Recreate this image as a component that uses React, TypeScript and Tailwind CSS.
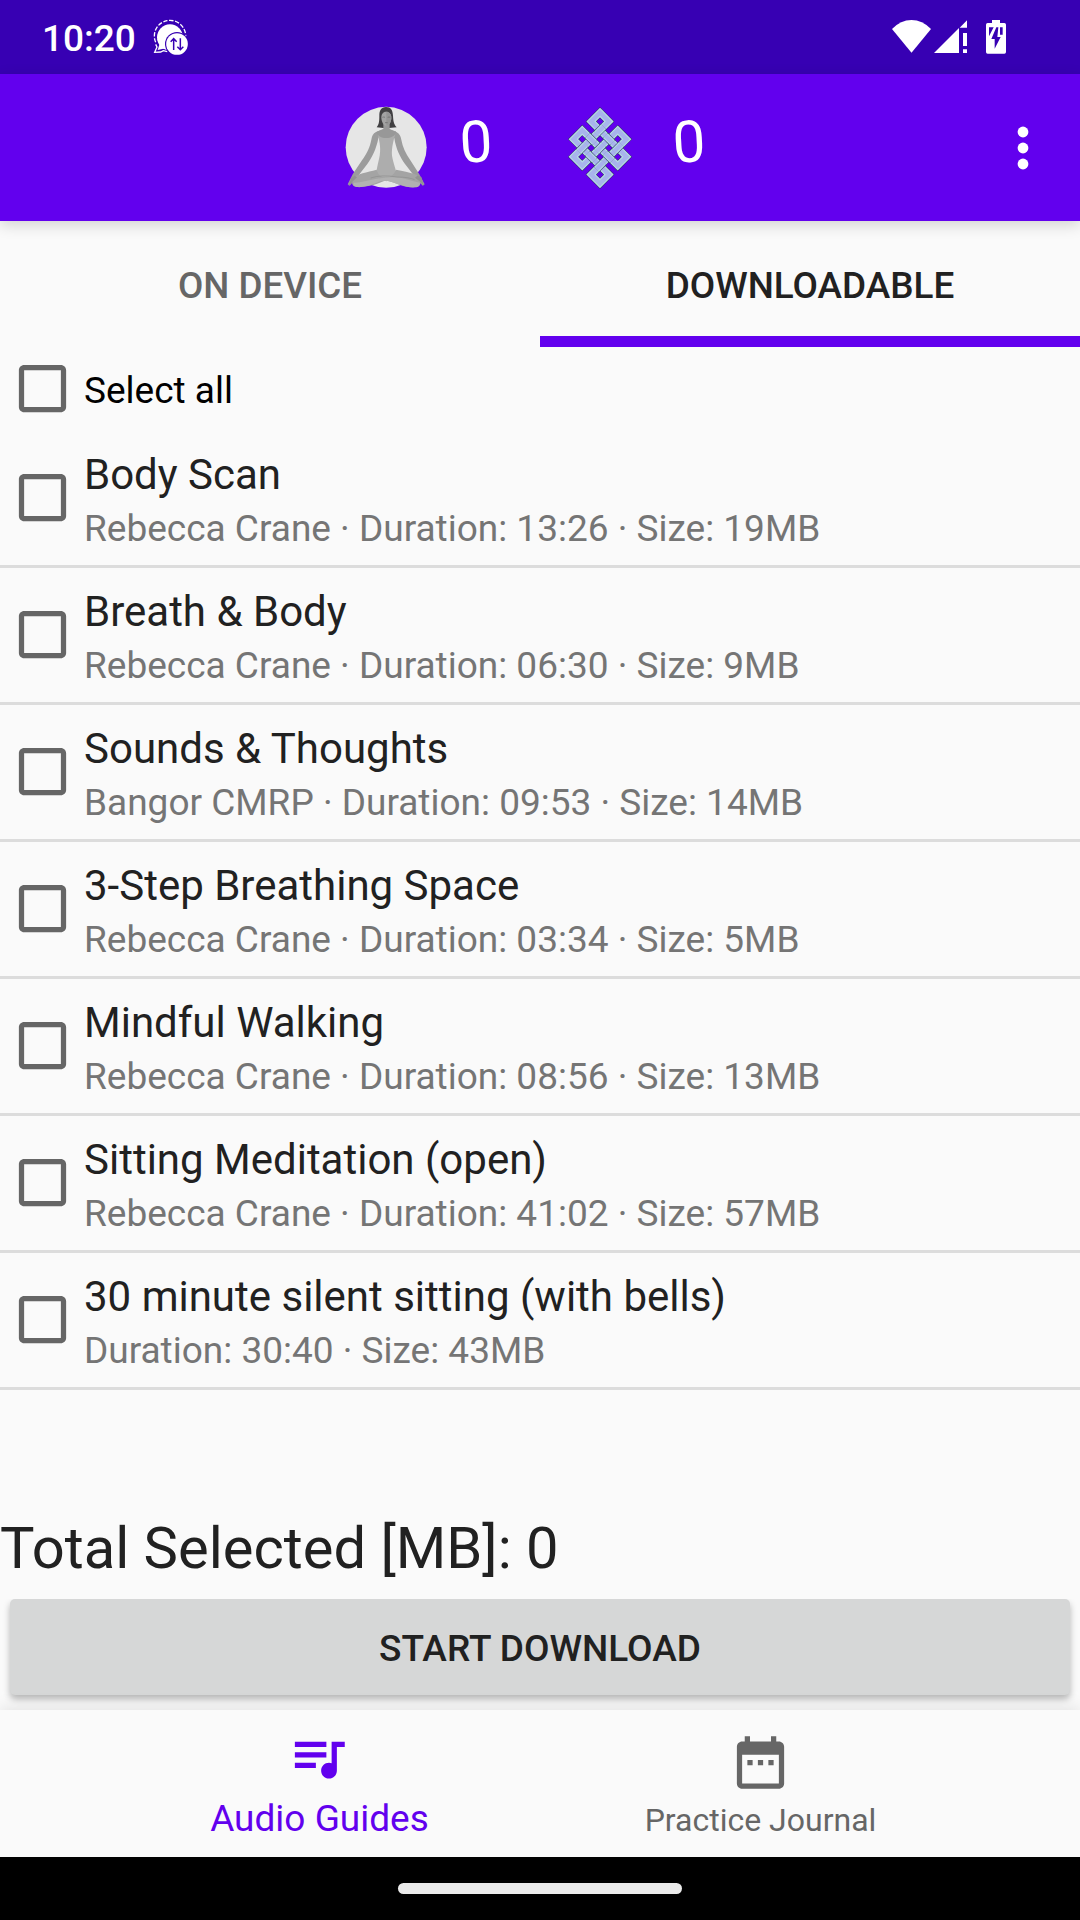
import React from "react";

type Guide = { title: string; detail: string };

const guides: Guide[] = [
  { title: "Body Scan", detail: "Rebecca Crane · Duration: 13:26 · Size: 19MB" },
  { title: "Breath & Body", detail: "Rebecca Crane · Duration: 06:30 · Size: 9MB" },
  { title: "Sounds & Thoughts", detail: "Bangor CMRP · Duration: 09:53 · Size: 14MB" },
  { title: "3-Step Breathing Space", detail: "Rebecca Crane · Duration: 03:34 · Size: 5MB" },
  { title: "Mindful Walking", detail: "Rebecca Crane · Duration: 08:56 · Size: 13MB" },
  { title: "Sitting Meditation (open)", detail: "Rebecca Crane · Duration: 41:02 · Size: 57MB" },
  { title: "30 minute silent sitting (with bells)", detail: "Duration: 30:40 · Size: 43MB" },
];

function Checkbox() {
  return (
    <span className="flex w-[84px] shrink-0 items-center pb-px pl-[10.5px]">
      <svg viewBox="0 0 24 24" className="size-[63px]" fill="#666666">
        <path d="M19 5v14H5V5h14m0-2H5c-1.1 0-2 .9-2 2v14c0 1.1.9 2 2 2h14c1.1 0 2-.9 2-2V5c0-1.100-.9-2-2-2z" />
      </svg>
    </span>
  );
}

function SyncBubbleIcon() {
  return (
    <svg viewBox="456 57 114 111" className="h-[37px] w-[38px]" fill="none">
      <path
        d="M467 128 A47 47 0 1 1 557 110"
        stroke="#fff"
        strokeWidth="4"
        strokeDasharray="13 5"
        transform="translate(0 -1)"
      />
      <path d="M467 133l4 8-7 16 18-1 8-4 12 3" stroke="#fff" strokeWidth="4" />
      <circle cx="510" cy="112" r="39" fill="#fff" />
      <path d="M472 118L478 134 473 150 490 146 505 151V120Z" fill="#fff" />
      <circle cx="531" cy="132" r="36" fill="#3700b3" />
      <circle cx="531" cy="132" r="32.500" fill="#fff" />
      <path
        d="M521 150V117M512 125l9-9 9 9M541 115v33M532 140l9 9 9-9"
        stroke="#3700b3"
        strokeWidth="4.500"
      />
    </svg>
  );
}

function StatusIcons() {
  return (
    <svg viewBox="96 54 345 114" className="h-[38px] w-[115px]" fill="#fff">
      <path d="M96 87 Q122 60 154.500 60 Q187 60 213 87 L154.500 158 Z" />
      <path d="M222 159 L297 84 V159 Z M299 83 L321 61 V83 Z" />
      <path d="M309 99h12v39h-12z M309 148h12v11h-12z" />
      <path
        fillRule="evenodd"
        d="M396 60h24v9h13q5 0 5 5v82q0 5-5 5h-50q-5 0-5-5V74q0-5 5-5h13z M387 82v27l14-27z M409 82l-15 35h10v29l18-35h-10l3-29z M420 82v22h8V82z"
      />
    </svg>
  );
}

function MeditationIcon() {
  return (
    <svg viewBox="31 33 246 249" className="h-[83px] w-[82px]">
      <circle cx="154.500" cy="157" r="121.500" fill="#e6e6e6" />
      <path
        d="M154 36 C139 36 134 47 134 61 C134 77 134 87 126 97 L146 99 H163 L186 97 C176 85 176 76 175 62 C174 45 169 36 154 36Z"
        fill="#414042"
      />
      <path d="M146 86h19v19h-19z" fill="#989898" />
      <path d="M154 50 C145 50 140 57 140 68 C141 82 147 92 155 92 C163 92 170 81 170 68 C170 57 164 50 154 50Z" fill="#a3a3a3" />
      <path d="M155 50 C164 50 170 57 170 68 C170 81 163 92 155 92Z" fill="#959595" />
      <path d="M143 67q4-2 8 0M159 67q4-2 8 0M151 83h8" stroke="#555" strokeWidth="1.500" fill="none" />
      <path
        d="M145 104 L124 111 C115 115 112 123 110 134 C106 155 98 174 82 196 L54 238 L39 268 L45 272 L66 248 L98 207 C112 188 125 162 131 130Z"
        fill="#9c9c9c"
      />
      <path
        d="M165 104 L185 111 C194 115 198 123 200 134 C204 155 212 174 227 196 L254 238 L270 268 L264 272 L244 250 L211 207 C197 188 184 162 179 130Z"
        fill="#9c9c9c"
      />
      <path
        d="M128 109 C132 135 140 153 135 182 C130 207 125 223 124 244 L155 259 L187 244 C184 221 176 206 172 182 C170 156 178 134 184 109 L164 104 H145Z"
        fill="#adadad"
      />
      <path d="M125 111 L145 102 H165 L185 111 C181 124 169 129 154 129 C140 129 129 123 125 111Z" fill="#989898" />
      <path
        d="M126 224 C97 232 66 236 58 248 C49 263 50 272 65 275 C91 279 126 269 154 256 L178 263 C211 277 241 281 253 272 C263 264 259 248 242 238 C223 232 205 228 184 224 C178 240 166 247 153 247 C139 247 130 240 126 224Z"
        fill="#a4a4a4"
      />
      <path d="M57 263 C91 263 121 246 153 250 C126 264 94 279 66 276 C57 275 54 270 57 263Z" fill="#b2b2b2" />
      <path d="M123 257 C144 245 168 246 197 248 C215 251 236 259 255 263 C258 270 252 277 242 277 C214 280 188 263 155 257Z" fill="#b1b1b1" />
      <path d="M108 249q32-11 79-3q34 0 53 8" stroke="#8e8e8e" strokeWidth="2" fill="none" />
      <path d="M42 273l8-24 10-7 7 5-14 13zM268 272l-8-26-12-4-7 6 14 11z" fill="#929292" />
    </svg>
  );
}

// Lattice coordinates: u runs down-right, v runs up-right, in units of one cell.
const CELL = 26.6;
const point = (u: number, v: number) => `${((u + v) / 2) * CELL} ${((u - v) / 2) * CELL}`;

const knotCorners: [number, number][] = [
  [-4, 4], [-2, 4], [-2, -4], [0, -4], [0, 4], [2, 4], [2, -4], [4, -4], [4, -2],
  [-4, -2], [-4, 0], [4, 0], [4, 2], [-4, 2],
];
const knotPath = `M${knotCorners.map(([u, v]) => point(u, v)).join("L")}Z`;

const crossings = [-2, 0, 2].flatMap((u) =>
  [-2, 0, 2].map((v) =>
    ((u + v) / 2) % 2 === 0
      ? `M${point(u, v - 0.8)}L${point(u, v + 0.8)}`
      : `M${point(u - 0.8, v)}L${point(u + 0.8, v)}`
  )
);

function Band({ d }: { d: string }) {
  return (
    <>
      <path d={d} stroke="#2c3560" strokeWidth="23.500" />
      <path d={d} stroke="#b5dbe3" strokeWidth="20.500" />
      <path d={d} stroke="#a8b4ec" strokeWidth="13" />
    </>
  );
}

function KnotIcon() {
  return (
    <svg viewBox="-96 -123 192 246" className="h-[82px] w-16" fill="none">
      <Band d={knotPath} />
      {crossings.map((d) => (
        <Band key={d} d={d} />
      ))}
    </svg>
  );
}

function Counter() {
  return (
    <span className="block w-[34px] -rotate-3 text-center text-[58px] leading-[68px]">0</span>
  );
}

export default function App() {
  return (
    <div className="flex h-[1920px] w-[1080px] flex-col overflow-hidden bg-[#fafafa] font-[Roboto,sans-serif] text-[#212121]">
      <div className="flex h-[74px] shrink-0 items-center bg-[#3700b3] pr-[73px] pl-[42px] text-white">
        <span className="w-[110px] pt-[3px] text-[37px] leading-[44px] font-medium">10:20</span>
        <SyncBubbleIcon />
        <div className="ml-auto">
          <StatusIcons />
        </div>
      </div>

      <header className="relative z-10 flex h-[147px] shrink-0 items-center bg-[#6200ee] pl-[345px] text-white shadow-[0_4px_14px_rgba(0,0,0,0.16)]">
        <MeditationIcon />
        <div className="ml-[32px] -mt-3">
          <Counter />
        </div>
        <div className="ml-[75px]">
          <KnotIcon />
        </div>
        <div className="ml-[40px] -mt-3">
          <Counter />
        </div>
        <svg viewBox="0 0 12 44" className="ml-auto mr-[51.5px] h-11 w-3" fill="#fff">
          <circle cx="6" cy="6" r="5.400" />
          <circle cx="6" cy="22" r="5.400" />
          <circle cx="6" cy="38" r="5.400" />
        </svg>
      </header>

      <div className="grid h-[126px] shrink-0 grid-cols-2 text-[36.75px] leading-[44px] font-medium">
        <div className="flex items-center justify-center pt-[3px] text-[#666666]">ON DEVICE</div>
        <div className="flex items-center justify-center border-b-[11px] border-[#6200ee] pt-[14px] text-[36.9px]">
          DOWNLOADABLE
        </div>
      </div>

      <label className="flex h-[84px] shrink-0 items-center text-[37px] text-black">
        <Checkbox />
        <span className="pt-[3px]">Select all</span>
      </label>

      <ul className="shrink-0">
        {guides.map((guide) => (
          <li key={guide.title} className="flex h-[137px] border-b-[3px] border-[#dcdcdc]">
            <Checkbox />
            <div className="pt-[17px]">
              <div className="text-[42px] leading-[53px]">{guide.title}</div>
              <div className="text-[37px] leading-[55px] text-[#757575]">{guide.detail}</div>
            </div>
          </li>
        ))}
      </ul>

      <div className="mt-auto h-[86px] shrink-0 text-[57.9px] leading-[70px]">Total Selected [MB]: 0</div>
      <div className="h-[111px] shrink-0 overflow-hidden px-[10px]">
        <button className="h-24 w-full rounded-[5px] bg-[#d6d7d7] pt-[3px] text-[37px] font-medium shadow-[0_4px_7px_rgba(0,0,0,0.28)]">
          START DOWNLOAD
        </button>
      </div>

      <nav className="grid h-[147px] shrink-0 grid-cols-2 bg-[#fafafa] px-[99px] shadow-[0_-2px_16px_rgba(0,0,0,0.10)]">
        <div className="flex flex-col items-center pt-4 text-[#6200ee]">
          <svg viewBox="0 0 24 24" className="mr-[2px] size-[63px]" fill="currentColor">
            <path d="M15 6H3v2h12V6zm0 4H3v2h12v-2zM3 16h8v-2H3v2zM17 6v8.180c-.31-.11-.65-.18-1-.18-1.660 0-3 1.340-3 3s1.340 3 3 3 3-1.340 3-3V8h3V6h-5z" />
          </svg>
          <span className="mt-[8px] text-[37px] leading-[44px]">Audio Guides</span>
        </div>
        <div className="flex flex-col items-center pt-[21px] text-[#666666]">
          <svg viewBox="0 0 24 24" className="size-[63px]" fill="currentColor">
            <path d="M9 11H7v2h2v-2zm4 0h-2v2h2v-2zm4 0h-2v2h2v-2zm2-7h-1V2h-2v2H8V2H6v2H5c-1.110 0-1.990.9-1.990 2L3 20c0 1.100.89 2 2 2h14c1.100 0 2-.9 2-2V6c0-1.100-.9-2-2-2zm0 16H5V9h14v11z" />
          </svg>
          <span className="mt-[6px] text-[32px] leading-[40px]">Practice Journal</span>
        </div>
      </nav>

      <div className="flex h-[63px] shrink-0 justify-center bg-black pt-[26px]">
        <div className="h-[11px] w-[284px] rounded-full bg-[#ebebeb]" />
      </div>
    </div>
  );
}
